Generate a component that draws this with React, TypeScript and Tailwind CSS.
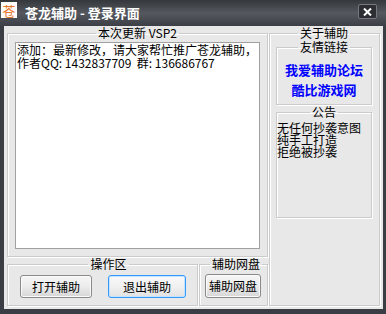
import React from 'react';

const FONT = "font-['Noto_Sans_CJK_SC','Noto_Sans',sans-serif]";

function GroupBox({ title, className, children }: { title: string; className: string; children?: React.ReactNode }) {
  return (
    <fieldset className={`border border-[#cbcbcb] shadow-[inset_1px_1px_0_#ffffff,1px_1px_0_#ffffff] ${className}`}>
      <legend className="mx-auto px-[2px] text-[12px] leading-[14px] text-black">{title}</legend>
      {children}
    </fieldset>
  );
}

function WinButton({ label, focused, className }: { label: string; focused?: boolean; className: string }) {
  return (
    <button
      type="button"
      className={`flex items-center justify-center rounded-[3px] border text-[12px] text-black ${
        focused
          ? 'border-[#3399ff] bg-gradient-to-b from-[#fafafa] via-[#f0f0f0] to-[#e2e2e2] shadow-[inset_0_0_0_1px_#c4e3ff]'
          : 'border-[#8a8a8a] bg-gradient-to-b from-[#f6f6f6] via-[#ececec] to-[#d6d6d6] shadow-[inset_0_0_0_1px_#fbfbfb]'
      } ${className}`}
    >
      {label}
    </button>
  );
}

export default function App() {
  return (
    <div className={`w-[386px] h-[314px] bg-[#3a3d43] flex flex-col ${FONT}`}>
      {/* title bar */}
      <div className="h-[26px] flex items-start bg-gradient-to-b from-[#34373c] via-[#55585e] to-[#3c3f45]">
        <div className="ml-[1px] mt-[2px] w-[16px] h-[16px] bg-white flex items-center justify-center text-[13px] leading-none text-[#e8762a]">
          苍
        </div>
        <span className="ml-[8px] mt-[5px] text-[13px] leading-[15px] font-bold text-white">苍龙辅助 - 登录界面</span>
        <div className="ml-auto mr-[9px] mt-[4px] w-[19px] h-[15px] rounded-[2px] border border-[#75787e] bg-[#2c2e33] flex items-center justify-center">
          <svg width="9" height="8" viewBox="0 0 9 8">
            <path d="M1 0.5 L8 7.5 M8 0.5 L1 7.5" stroke="#ffffff" strokeWidth="2" />
          </svg>
        </div>
      </div>

      {/* client area */}
      <div className="h-[283px] ml-[4px] mr-[3px] bg-[#e8e8e8] flex gap-[1px] pl-[3px] pr-[3px]">
        <div className="w-[261px] flex flex-col">
          <GroupBox title="本次更新 VSP2" className="pl-[7px] pr-[7px] pt-[2px] pb-[7px]">
            <div className="w-[245px] h-[207px] bg-white border border-[#a0a0a0] pl-[1px] text-[12px] leading-[13px] text-black whitespace-pre">
              <div>添加：最新修改，请大家帮忙推广苍龙辅助，</div>
              <div>作者QQ: 1432837709  群: 136686767</div>
            </div>
          </GroupBox>
          <div className="flex gap-[1px]">
            <GroupBox title="操作区" className="w-[191px] pl-[12px] pt-[4px] pb-[7px]">
              <div className="flex gap-[16px]">
                <WinButton label="打开辅助" className="w-[72px] h-[23px]" />
                <WinButton label="退出辅助" focused className="w-[78px] h-[23px]" />
              </div>
            </GroupBox>
            <GroupBox title="辅助网盘" className="w-[69px] pl-[5px] pt-[3px] pb-[7px]">
              <WinButton label="辅助网盘" className="w-[56px] h-[24px]" />
            </GroupBox>
          </div>
        </div>

        <GroupBox title="关于辅助" className="w-[111px] h-[280px] pl-[6px] pr-[7px]">
          <GroupBox title="友情链接" className="w-[96px] pt-[6px] pb-[4px]">
            <div className="flex flex-col items-center text-[13px] leading-[20px] font-bold text-[#0000ff]">
              <span>我爱辅助论坛</span>
              <span>酷比游戏网</span>
            </div>
          </GroupBox>
          <GroupBox title="公告" className="w-[96px] h-[113px] pt-[3px]">
            <div className="text-[12px] leading-[12px] text-black">
              <div>无任何抄袭意图</div>
              <div>纯手工打造</div>
              <div>拒绝被抄袭</div>
            </div>
          </GroupBox>
        </GroupBox>
      </div>
    </div>
  );
}
